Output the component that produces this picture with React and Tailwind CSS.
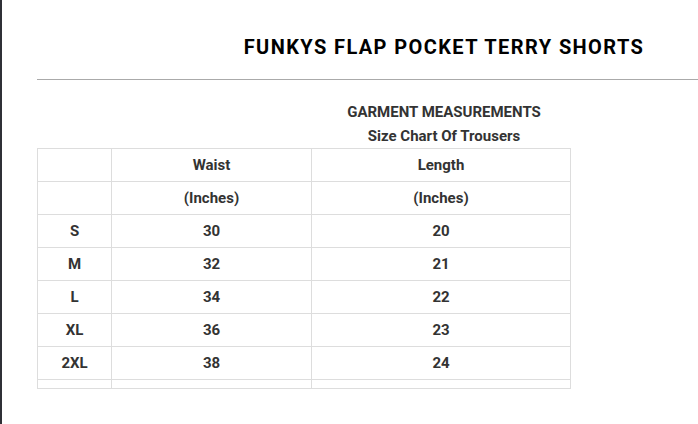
import React from "react";

const sizes = [
  ["S", "30", "20"],
  ["M", "32", "21"],
  ["L", "34", "22"],
  ["XL", "36", "23"],
  ["2XL", "38", "24"],
];

const cell = "border border-[#dddddd] h-[33px] p-0 text-center align-middle";

export default function App() {
  return (
    <div
      className="w-[698px] h-[424px] overflow-hidden bg-white flex"
      style={{ fontFamily: "Roboto, 'Liberation Sans', sans-serif" }}
    >
      <div className="w-[2px] shrink-0 bg-[#2f3036]" />
      <div className="pl-[35px] w-[849px] shrink-0">
        <h1 className="pt-[37px] h-[79px] text-center text-[20px] leading-[20px] font-bold tracking-[1.4px] text-black">
          FUNKYS FLAP POCKET TERRY SHORTS
        </h1>
        <div className="h-px bg-[#aaaaaa]" />
        <div className="pt-[20px] text-center text-[15px] leading-[24px] font-bold text-[#333333]">
          <div>GARMENT MEASUREMENTS</div>
          <div>Size Chart Of Trousers</div>
        </div>
        <table className="border-collapse table-fixed w-[533px] text-[15px] font-bold text-[#333333]">
          <colgroup>
            <col className="w-[74px]" />
            <col className="w-[200px]" />
            <col className="w-[259px]" />
          </colgroup>
          <tbody>
            <tr>
              <td className={cell}></td>
              <td className={cell}>Waist</td>
              <td className={cell}>Length</td>
            </tr>
            <tr>
              <td className={cell}></td>
              <td className={cell}>(Inches)</td>
              <td className={cell}>(Inches)</td>
            </tr>
            {sizes.map(([s, w, l]) => (
              <tr key={s}>
                <td className={cell}>{s}</td>
                <td className={cell}>{w}</td>
                <td className={cell}>{l}</td>
              </tr>
            ))}
            <tr>
              <td className="border border-[#dddddd] h-[9px] p-0"></td>
              <td className="border border-[#dddddd] h-[9px] p-0"></td>
              <td className="border border-[#dddddd] h-[9px] p-0"></td>
            </tr>
          </tbody>
        </table>
      </div>
    </div>
  );
}
